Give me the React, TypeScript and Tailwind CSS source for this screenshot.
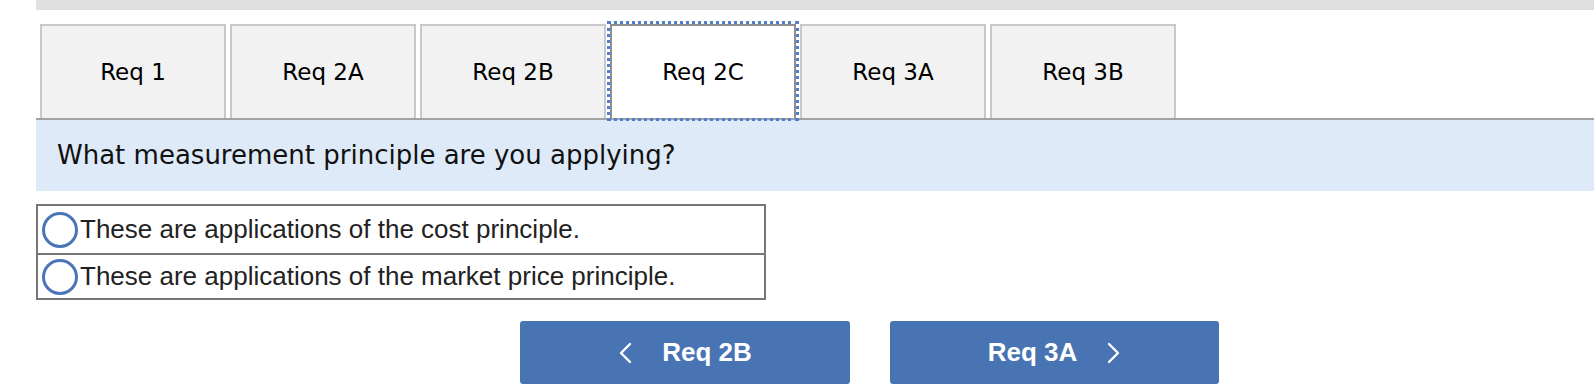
import { useState } from 'react';

// Tabbed requirement panel with a multiple-choice question

const tabs = ['Req 1', 'Req 2A', 'Req 2B', 'Req 2C', 'Req 3A', 'Req 3B'];

const options = [
  'These are applications of the cost principle.',
  'These are applications of the market price principle.',
];

function Chevron({ dir }: { dir: 'left' | 'right' }) {
  return (
    <svg width="14" height="22" viewBox="0 0 14 22" fill="none">
      <path
        d={dir === 'left' ? 'M12 2 L3 11 L12 20' : 'M2 2 L11 11 L2 20'}
        stroke="white"
        strokeWidth="2.4"
        strokeLinecap="round"
        strokeLinejoin="round"
      />
    </svg>
  );
}

export default function App() {
  const [active, setActive] = useState(3);
  const [picked, setPicked] = useState<number | null>(null);

  return (
    <div className="w-[1594px] h-[388px] overflow-hidden bg-white pl-[36px]">
      {/* top strip */}
      <div className="h-[10px] bg-[#e0e0e0]" />

      {/* tab row */}
      <div className="mt-[14px] flex gap-[4px] pl-[4px] border-b-2 border-[#a3a3a3]">
        {tabs.map((t, i) => (
          <button
            key={t}
            onClick={() => setActive(i)}
            className={
              i === active
                ? 'w-[186px] h-[94px] bg-white border-2 border-b-0 border-[#8e8e8e] outline-[3px] outline-dotted outline-[#4f7fcc] outline-offset-[0px] text-[23px] text-black font-["DejaVu_Sans",Verdana,sans-serif]'
                : 'w-[186px] h-[94px] bg-[#f2f2f2] border-2 border-b-0 border-[#c8c8c8] text-[23px] text-black font-["DejaVu_Sans",Verdana,sans-serif]'
            }
          >
            {t}
          </button>
        ))}
      </div>

      {/* question */}
      <div className="h-[71px] bg-[#deeaf7] flex items-center pl-[21px] text-[26px] text-[#111] font-['DejaVu_Sans',Verdana,sans-serif]">
        What measurement principle are you applying?
      </div>

      {/* choices */}
      <div className="mt-[13px] w-[730px] border-2 border-[#777]">
        {options.map((o, i) => (
          <label
            key={o}
            onClick={() => setPicked(i)}
            className={
              i === 0
                ? 'h-[47px] flex items-center pl-[4px] gap-[2px] cursor-pointer'
                : 'h-[45px] flex items-center pl-[4px] gap-[2px] cursor-pointer border-t-2 border-[#777]'
            }
          >
            <span className="w-[36px] h-[36px] rounded-full border-[3px] border-[#4a76b8] bg-white flex items-center justify-center shrink-0">
              {picked === i && <span className="w-[17px] h-[17px] rounded-full bg-[#4a76b8]" />}
            </span>
            <span className="text-[26px] text-[#222] font-['Liberation_Sans',Arial,sans-serif]">{o}</span>
          </label>
        ))}
      </div>

      {/* nav buttons */}
      <div className="mt-[21px] pl-[484px] flex gap-[40px]">
        <button className="w-[330px] h-[63px] rounded-[3px] bg-[#4874b4] flex items-center justify-center gap-[30px] text-white text-[26px] font-bold font-['Liberation_Sans',Arial,sans-serif]">
          <Chevron dir="left" />
          <span>Req 2B</span>
        </button>
        <button className="w-[329px] h-[63px] rounded-[3px] bg-[#4874b4] flex items-center justify-center gap-[30px] text-white text-[26px] font-bold font-['Liberation_Sans',Arial,sans-serif]">
          <span>Req 3A</span>
          <Chevron dir="right" />
        </button>
      </div>
    </div>
  );
}
